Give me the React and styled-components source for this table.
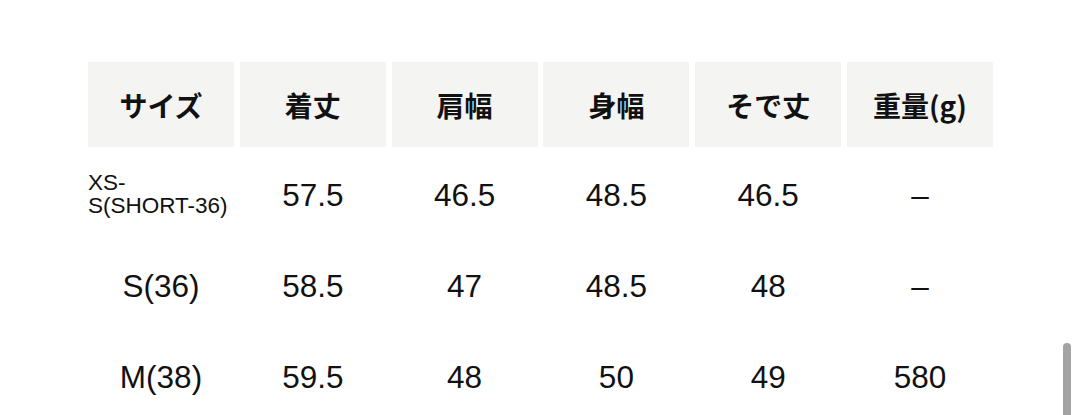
import React from "react";
import styled, { createGlobalStyle } from "styled-components";

const GlobalStyle = createGlobalStyle`
  html, body {
    margin: 0;
    padding: 0;
    background: #fff;
    overflow: hidden;
  }
`;

const Page = styled.div`
  position: relative;
  width: 1080px;
  height: 415px;
  overflow: hidden;
  background: #fff;
  padding: 62px 0 0 88px;
  box-sizing: border-box;
`;

const Grid = styled.div`
  display: grid;
  grid-template-columns: repeat(6, 146px);
  grid-auto-rows: 85px;
  column-gap: 5.8px;
  row-gap: 6px;
`;

const HeadCell = styled.div`
  display: flex;
  align-items: center;
  justify-content: center;
  background: #f4f4f2;
  font-family: "Noto Sans CJK JP", "Noto Sans", sans-serif;
  font-weight: 700;
  font-size: 28px;
  color: #111;
`;

const Cell = styled.div`
  display: flex;
  align-items: center;
  justify-content: ${(p) => (p.$left ? "flex-start" : "center")};
  font-family: "Liberation Sans", Arial, sans-serif;
  font-size: ${(p) => (p.$small ? "22.5px" : "31.5px")};
  line-height: ${(p) => (p.$small ? "23px" : "1.2")};
  color: #111;
  padding-bottom: ${(p) => (p.$small ? "4px" : "0")};
`;

const SmallLine = styled.span`
  display: block;
`;

const NextStrip = styled.div`
  height: 8px;
  background: #f7f7f7;
  width: 905px;
`;

const Scrollbar = styled.div`
  position: absolute;
  left: 1063px;
  top: 343px;
  width: 8px;
  height: 90px;
  border-radius: 4px;
  background: #a3a3a3;
`;

const headers = ["サイズ", "着丈", "肩幅", "身幅", "そで丈", "重量(g)"];

const rows = [
  ["XS-\nS(SHORT-36)", "57.5", "46.5", "48.5", "46.5", "–"],
  ["S(36)", "58.5", "47", "48.5", "48", "–"],
  ["M(38)", "59.5", "48", "50", "49", "580"],
];

export default function App() {
  return (
    <>
      <GlobalStyle />
      <Page>
        <Grid>
          {headers.map((h) => (
            <HeadCell key={h}>{h}</HeadCell>
          ))}
          {rows.map((row, i) =>
            row.map((v, j) => {
              const multi = v.includes("\n");
              return (
                <Cell key={`${i}-${j}`} $left={multi} $small={multi}>
                  {multi ? (
                    <div>
                      {v.split("\n").map((line, k) => (
                        <SmallLine key={k}>{line}</SmallLine>
                      ))}
                    </div>
                  ) : (
                    v
                  )}
                </Cell>
              );
            })
          )}
        </Grid>
        <NextStrip />
        <Scrollbar />
      </Page>
    </>
  );
}
